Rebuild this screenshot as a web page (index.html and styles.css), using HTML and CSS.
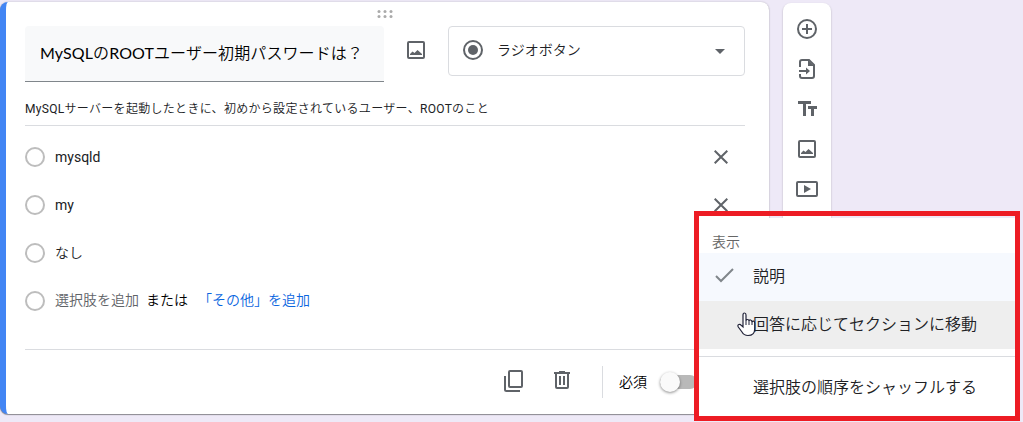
FILE: index.html
```html
<!DOCTYPE html>
<html lang="ja">
<head>
<meta charset="utf-8">
<title>フォームの編集</title>
<link rel="stylesheet" href="styles.css">
</head>
<body>
<main class="page">
  <section class="card">
    <div class="drag"><svg width="16" height="8" viewBox="0 0 16 8" fill="#aaa"><circle cx="2" cy="1.5" r="1.5"/><circle cx="8" cy="1.5" r="1.5"/><circle cx="14" cy="1.5" r="1.5"/><circle cx="2" cy="6.5" r="1.5"/><circle cx="8" cy="6.5" r="1.5"/><circle cx="14" cy="6.5" r="1.5"/></svg></div>
    <div class="head">
      <div class="title">MySQLのROOTユーザー初期パスワードは？</div>
      <svg class="head-image" width="18" height="18" viewBox="0 0 18 18"><rect x="1" y="1" width="16" height="16" rx="1" fill="none" stroke="#5f6368" stroke-width="2"/><path d="M3 14v-1l2.500-2.500L7.500 12l3-3L15 13v1z" fill="#5f6368"/></svg>
      <div class="select">
        <svg width="20" height="20" viewBox="0 0 20 20"><circle cx="10" cy="10" r="9" fill="none" stroke="#5f6368" stroke-width="2"/><circle cx="10" cy="10" r="5" fill="#5f6368"/></svg>
        <span class="select-label">ラジオボタン</span>
        <svg class="arrow" width="10" height="5" viewBox="0 0 10 5"><path d="M0 0h10L5 5z" fill="#5f6368"/></svg>
      </div>
    </div>
    <div class="description">MySQLサーバーを起動したときに、初めから設定されているユーザー、ROOTのこと</div>
    <div class="options">
      <div class="option"><i class="radio"></i><span class="option-text">mysqld</span><svg class="remove" width="14" height="14" viewBox="0 0 14 14"><path d="m.7.7 12.6 12.6M13.3.7.7 13.3"/></svg></div>
      <div class="option"><i class="radio"></i><span class="option-text">my</span><svg class="remove" width="14" height="14" viewBox="0 0 14 14"><path d="m.7.7 12.6 12.6M13.3.7.7 13.3"/></svg></div>
      <div class="option"><i class="radio"></i><span class="option-text">なし</span></div>
      <div class="option add"><i class="radio"></i><span class="placeholder">選択肢を追加</span><span class="or">または</span><a class="other">「その他」を追加</a></div>
    </div>
    <div class="footer">
      <svg class="copy" width="19" height="22" viewBox="0 0 19 22" fill="none" stroke="#5f6368" stroke-width="2"><rect x="5" y="1" width="13" height="16" rx="1"/><path d="M1 6v13.500q0 1.500 1.500 1.500H16"/></svg>
      <svg class="trash" width="16" height="18" viewBox="0 0 16 18"><path d="M0 1h5V0h6v1h5v2h-1v13q0 2-2 2H3q-2 0-2-2V3H0zM3 3v13h10V3zM5 5h2v9H5zM9 5h2v9H9z" fill="#5f6368" fill-rule="evenodd"/></svg>
      <span class="separator"></span>
      <span class="required">必須</span>
      <span class="toggle"><i class="knob"></i></span>
    </div>
  </section>
  <nav class="rail">
    <svg width="20" height="20" viewBox="0 0 20 20" fill="none" stroke="#5f6368" stroke-width="2"><circle cx="10" cy="10" r="9"/><path d="M10 5v10M5 10h10"/></svg>
    <svg width="16" height="20" viewBox="0 0 16 20"><path d="M1 8V3q0-2 2-2h7l5 5v11q0 2-2 2H3q-2 0-2-2v-2M0 12h9" fill="none" stroke="#5f6368" stroke-width="2"/><path d="M9 1v6h6zM7 8.500l4 3.500-4 3.500z" fill="#5f6368"/></svg>
    <svg width="19" height="15" viewBox="0 0 19 15"><path d="M0 0h13v3H8v12H5V3H0zM10 5h9v3h-3v7h-3V8h-3z" fill="#5f6368"/></svg>
    <svg width="18" height="18" viewBox="0 0 18 18"><rect x="1" y="1" width="16" height="16" rx="1" fill="none" stroke="#5f6368" stroke-width="2"/><path d="M3 14v-1l2.500-2.500L7.500 12l3-3L15 13v1z" fill="#5f6368"/></svg>
    <svg width="22" height="16" viewBox="0 0 22 16"><rect x="1" y="1" width="20" height="14" rx="1" fill="none" stroke="#5f6368" stroke-width="2"/><path d="M8 4v8l7-4z" fill="#5f6368"/></svg>
  </nav>
</main>
<div class="highlight">
  <div class="menu">
    <div class="menu-title">表示</div>
    <div class="item checked"><svg class="check" width="19" height="15" viewBox="0 0 19 15"><path d="m1 8 5 5L18 1" fill="none" stroke="#80868b" stroke-width="2"/></svg><span>説明</span></div>
    <div class="item hovered"><span>回答に応じてセクションに移動</span></div>
    <div class="item shuffle"><span>選択肢の順序をシャッフルする</span></div>
  </div>
</div>
<svg class="cursor" width="19" height="25" viewBox="0 0 19 25"><path d="M6 15V3q0-2 1.500-2T9 3v6q0-1.500 1.500-1.500T12 9q.2-1.200 1.500-1T15 10q.3-1 1.500-.8T17.700 11v6q0 6.500-6.700 6.500-4 0-6-3.500L1.300 15q-1-2 .5-2.500T4 13.200z" fill="#fff" stroke="#202238" stroke-width="1.200"/><path d="M9 9v4M12 9v4M15 10v3" stroke="#202238"/></svg>
</body>
</html>
```
FILE: styles.css
```css
* { box-sizing: border-box; }
body { margin: 0; height: 422px; overflow: hidden; background: #eee9f7; color: #202124; font-family: Roboto, "Noto Sans CJK JP DemiLight", "Noto Sans CJK JP Light", "Noto Sans CJK JP", sans-serif; font-size: 14px; line-height: 20px; }
svg { display: block; flex: none; }
.page { display: flex; align-items: flex-start; gap: 14px; padding-top: 2px; height: 422px; }
.card { width: 769px; height: 412px; padding: 0 24px 0 19px; border-left: 6px solid #4285f4; border-radius: 8px; background: #fff; box-shadow: 0 1px 1px rgba(0,0,0,.38), 0 0 2px rgba(0,0,0,.22); }
.drag { display: flex; justify-content: center; height: 24px; padding-top: 8px; }
.head { display: flex; align-items: flex-start; height: 56px; }
.title { width: 359px; height: 56px; padding: 17px 0 0 15px; border-bottom: 1px solid #80868b; border-radius: 4px 4px 0 0; background: #f8f9fa; color: #000; font: 400 16px/20px Lato, "Noto Sans CJK JP DemiLight", "Noto Sans CJK JP Light", "Noto Sans CJK JP", sans-serif; letter-spacing: .1px; white-space: nowrap; }
.head-image { margin: 15px 23px 0; }
.select { display: flex; align-items: center; flex: 1; height: 50px; padding: 0 19px 2px 14px; border: 1px solid #dadce0; border-radius: 4px; }
.select-label { flex: 1; margin-left: 14px; }
.arrow { margin-top: 3px; }
.description { height: 44px; padding-top: 17px; border-bottom: 1px solid #dadce0; font-size: 12px; letter-spacing: .3px; white-space: nowrap; }
.options { padding-top: 7px; height: 223px; }
.option { display: flex; align-items: center; height: 48px; padding-right: 17px; }
.radio { width: 20px; height: 20px; margin-right: 10px; border: 2px solid #bdbdbd; border-radius: 50%; }
.option-text { flex: 1; }
.remove { fill: none; stroke: #5f6368; stroke-width: 2; }
.add span, .add a { margin-top: -2px; }
.placeholder { color: #5f6368; }
.add .or { margin-left: 7px; margin-right: 10px; color: #000; }
.other { color: #0b66e0; }
.footer { display: flex; align-items: center; height: 66px; padding-left: 479px; border-top: 1px solid #dadce0; }
.copy { margin-top: -4px; }
.trash { margin: -5px 32px 0 31px; }
.separator { width: 1px; height: 32px; margin-top: -2px; background: #dadce0; }
.required { margin: -2px 13px 0 16px; color: #000; white-space: nowrap; }
.toggle { display: flex; align-items: center; flex: none; width: 37px; height: 14px; margin-top: -2px; border-radius: 7px; background: #b9b9b9; }
.knob { flex: none; width: 20px; height: 20px; border-radius: 50%; background: #fafafa; box-shadow: 0 1px 3px rgba(0,0,0,.45); }
.rail { display: flex; flex-direction: column; width: 48px; height: 298px; margin-top: 1px; padding-top: 6px; border-radius: 8px; background: #fff; box-shadow: 0 1px 2px rgba(0,0,0,.28); }
.rail svg { margin: 0 auto; }
.rail svg:nth-child(1) { margin-top: 10px; }
.rail svg:nth-child(2) { margin-top: 20px; }
.rail svg:nth-child(3) { margin-top: 22px; }
.rail svg:nth-child(4) { margin-top: 24px; }
.rail svg:nth-child(5) { margin-top: 23px; }
.highlight { position: absolute; left: 694px; top: 211px; width: 326px; height: 210px; padding-top: 2px; border: 5px solid #ed1c24; }
.menu { height: 198px; padding-top: 14px; background: #fff; }
.menu-title { height: 21px; padding-left: 13px; color: #666; }
.item { display: flex; align-items: center; height: 48px; padding-left: 54px; font-size: 16px; white-space: nowrap; }
.checked { padding-left: 16px; gap: 19px; background: #f6f9fe; }
.check { margin-top: -4px; }
.hovered { background: #eee; }
.shuffle { height: 60px; margin-top: 7px; padding-top: 2px; border-top: 1px solid #dadce0; }
.cursor { position: absolute; left: 737px; top: 312px; }
```
